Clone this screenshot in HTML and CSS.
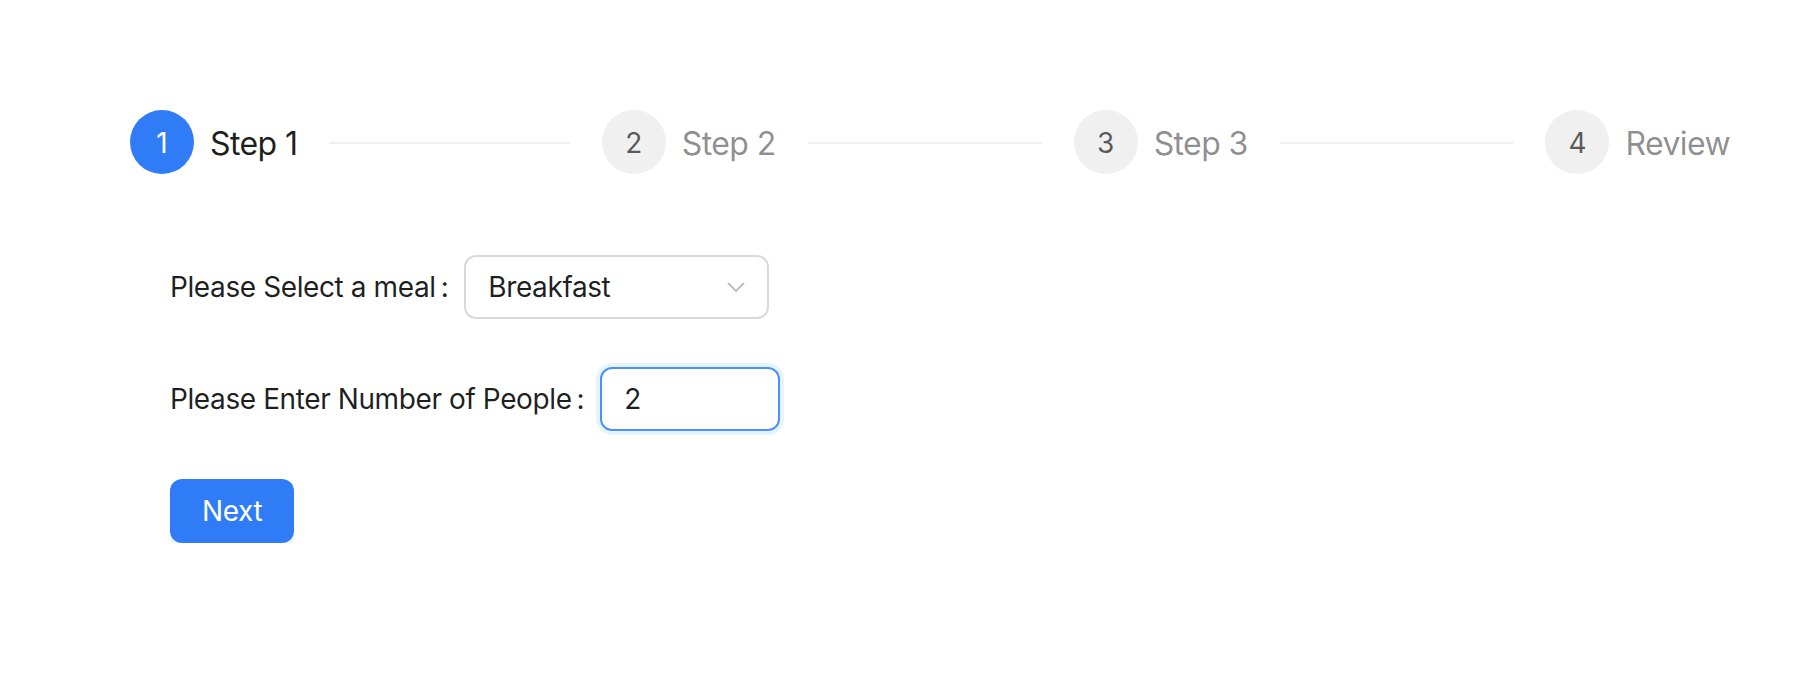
FILE: index.html
```html
<!DOCTYPE html>
<html lang="en">
<head>
<meta charset="utf-8">
<title>Steps form</title>
<link rel="stylesheet" href="styles.css">
</head>
<body>
<div class="page">
  <div class="steps">
    <div class="step active">
      <div class="step-icon">1</div>
      <div class="step-title">Step 1</div>
    </div>
    <div class="step">
      <div class="step-icon">2</div>
      <div class="step-title">Step 2</div>
    </div>
    <div class="step">
      <div class="step-icon">3</div>
      <div class="step-title">Step 3</div>
    </div>
    <div class="step last">
      <div class="step-icon">4</div>
      <div class="step-title">Review</div>
    </div>
  </div>

  <form class="form">
    <div class="form-item">
      <label class="form-label">Please Select a meal</label>
      <div class="select">
        <span class="select-value">Breakfast</span>
        <svg class="select-arrow" width="18" height="10" viewBox="0 0 18 10"><path d="M1 1 L9 9 L17 1" fill="none" stroke="#bdbdbd" stroke-width="1.8"/></svg>
      </div>
    </div>
    <div class="form-item">
      <label class="form-label">Please Enter Number of People</label>
      <div class="input focused">2</div>
    </div>
    <div class="form-item">
      <button type="button" class="btn-primary">Next</button>
    </div>
  </form>
</div>
</body>
</html>
```

FILE: styles.css
```css
html, body {
  margin: 0;
  padding: 0;
  background: #ffffff;
}

body {
  font-family: Inter, "Noto Sans", "Liberation Sans", sans-serif;
  color: rgba(0, 0, 0, 0.88);
  letter-spacing: -0.4px;
}

.page {
  padding: 110px 0 0 130px;
}

.steps {
  display: flex;
  width: 1600px;
  height: 64px;
}

.step {
  flex: 1;
  display: flex;
  align-items: center;
  padding-left: 32px;
  overflow: hidden;
  white-space: nowrap;
}

.step:first-child {
  padding-left: 0;
}

.step.last {
  flex: none;
}

.step-icon {
  flex: none;
  box-sizing: border-box;
  width: 64px;
  height: 64px;
  padding-top: 3px;
  border-radius: 50%;
  background: #f0f0f0;
  color: rgba(0, 0, 0, 0.65);
  font-size: 28px;
  line-height: 61px;
  text-align: center;
  margin-right: 16px;
  letter-spacing: 0;
}

.step.active .step-icon {
  background: #307cf6;
  color: #ffffff;
}

.step-title {
  position: relative;
  font-size: 32px;
  line-height: 64px;
  padding-top: 4px;
  margin: -2px 0;
  color: rgba(0, 0, 0, 0.45);
  padding-right: 32px;
  letter-spacing: -0.6px;
}

.step.active .step-title {
  color: rgba(0, 0, 0, 0.88);
}

.step-title::after {
  content: "";
  position: absolute;
  top: 34px;
  left: 100%;
  width: 9999px;
  height: 2px;
  background: #f0f0f0;
}

.step.last .step-title {
  padding-right: 0;
}

.step.last .step-title::after {
  display: none;
}

.form {
  margin-top: 81px;
  padding-left: 40px;
  display: flex;
  flex-direction: column;
  gap: 48px;
}

.form-item {
  display: flex;
  align-items: center;
  height: 64px;
}

.form-label {
  font-size: 28px;
  color: rgba(0, 0, 0, 0.88);
  white-space: nowrap;
}

.form-label::after {
  content: ":";
  margin: 0 16px 0 5px;
}

.select {
  box-sizing: border-box;
  width: 305px;
  height: 64px;
  border: 2px solid #d9d9d9;
  border-radius: 12px;
  padding: 0 22px;
  display: flex;
  align-items: center;
  justify-content: space-between;
  font-size: 28px;
}

.select-arrow {
  display: block;
}

.input {
  box-sizing: border-box;
  width: 180px;
  height: 64px;
  border: 2px solid #4b8ff8;
  border-radius: 12px;
  padding: 0 22px;
  display: flex;
  align-items: center;
  font-size: 28px;
  box-shadow: 0 0 0 4px rgba(5, 145, 255, 0.1);
}

.btn-primary {
  box-sizing: border-box;
  height: 64px;
  padding: 0 30px;
  border: 2px solid transparent;
  border-radius: 12px;
  background: #307cf6;
  color: #ffffff;
  font-family: inherit;
  font-size: 28px;
  letter-spacing: -0.4px;
  box-shadow: 0 4px 0 rgba(5, 145, 255, 0.1);
  cursor: pointer;
}
```
